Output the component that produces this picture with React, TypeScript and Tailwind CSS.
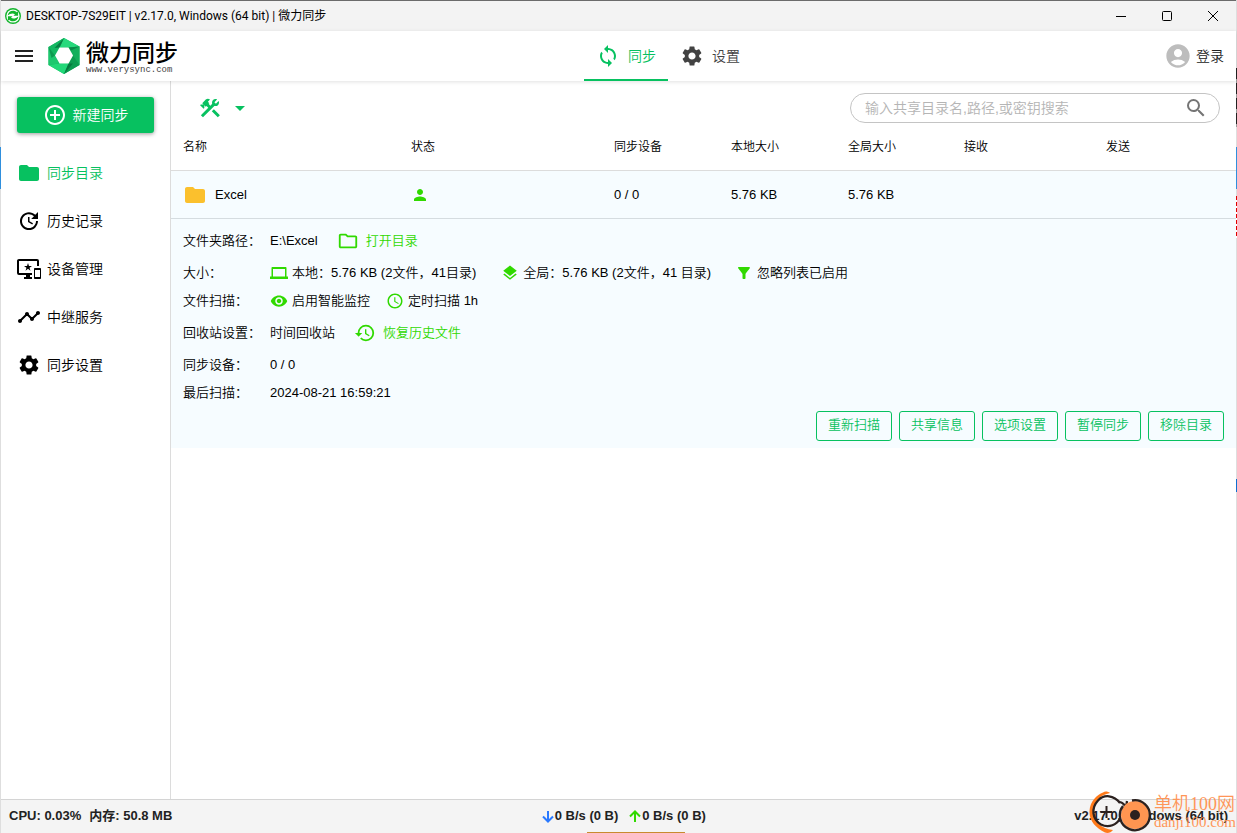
import type { ComponentType, ReactNode } from "react";
import {
  MdAccessTime,
  MdAccountCircle,
  MdAddCircleOutline,
  MdArrowDropDown,
  MdFilterAlt,
  MdFolder,
  MdHistory,
  MdImportantDevices,
  MdLayers,
  MdMenu,
  MdOutlineFolder,
  MdPerson,
  MdSearch,
  MdSettings,
  MdSync,
  MdTimeline,
  MdUpdate,
  MdVisibility,
} from "react-icons/md";

type IconType = ComponentType<{ className?: string }>;

function AppIcon() {
  return (
    <svg viewBox="0 0 16 16" className="size-4" aria-hidden="true">
      <circle cx="8" cy="8" r="8" fill="#13b52c" />
      <circle cx="8" cy="8" r="6.6" fill="#fff" />
      <path d="M2.600 7.600C2.900 4.700 5.200 2.700 8 2.700c1.600 0 2.800.5 3.800 1.500l1.300-.9v4.500H8.500l1.500-1.500C8 5 5 5.500 2.600 7.600z" fill="#13b52c" />
      <path d="M13.400 8.400c-.3 2.900-2.600 4.900-5.400 4.900-1.600 0-2.800-.5-3.800-1.500l-1.300.9V8.200h4.600L6 9.700c2 1.300 5 .8 7.400-1.300z" fill="#13b52c" />
    </svg>
  );
}

function HexLogo() {
  return (
    <svg viewBox="0 0 32 36" className="h-9 w-8" aria-hidden="true">
      <path d="M16 0 31.500 8.500V27L16 36 .5 27V9z" fill="#12b560" />
      <path d="M16 0 31.500 8.500 20.500 9.500H11.500z" fill="#27d97c" />
      <path d="M31.500 8.500V27L25 17.500 20.500 9.500z" fill="#12b05c" />
      <path d="M31.500 27 16 36 20.500 25.500 25 17.500z" fill="#0c9c50" />
      <path d="M16 36 .5 27 11 25.500H20.500z" fill="#22d878" />
      <path d="M.5 27V9L7 17.500 11 25.500z" fill="#1dc86e" />
      <path d="M.5 9 16 0 11.500 9.500 7 17.500z" fill="#14b862" />
      <path d="M16 0 11.500 9.500 6.500 10z" fill="#087f43" />
      <path d="M31.500 8.500 20.500 9.500 23 12.500z" fill="#0a8a49" />
      <path d="M16 36 20.500 25.500 25 25.500z" fill="#067a3f" />
      <path d="M.5 9 7 17.500 3.500 20z" fill="#0d9a50" />
      <path d="M11.500 9.500h9L25 17.500l-4.500 8h-9L7 17.500z" fill="#fff" />
    </svg>
  );
}

function HammerWrench() {
  return (
    <svg viewBox="0 0 24 24" className="size-6" fill="currentColor" aria-hidden="true">
      <path d="M13.78 15.3L19.78 21.3L21.89 19.14L15.89 13.14L13.78 15.3M17.5 10.1C17.11 10.1 16.69 10.05 16.36 9.91L4.97 21.25L2.86 19.14L10.27 11.74L8.5 9.96L7.78 10.66L6.33 9.25V12.11L5.63 12.81L2.11 9.25L2.81 8.55H5.62L4.22 7.14L7.78 3.58C8.95 2.41 10.83 2.41 12 3.58L9.89 5.74L11.3 7.14L10.59 7.85L12.38 9.63L14.2 7.75C14.06 7.42 14 7 14 6.63C14 4.66 15.56 3.11 17.5 3.11C18.09 3.11 18.61 3.25 19.08 3.53L16.41 6.2L17.91 7.7L20.58 5.03C20.86 5.5 21 6 21 6.63C21 8.55 19.45 10.1 17.5 10.1Z" />
    </svg>
  );
}

function LaptopIcon({ className }: { className?: string }) {
  return (
    <svg viewBox="0 0 18 18" className={className} fill="currentColor" aria-hidden="true">
      <path fillRule="evenodd" d="M2.500 3h13c.6 0 1 .4 1 1v8.500H18V15H0v-2.500h1.500V4c0-.6.4-1 1-1zM3 5v7.500h12V5z" />
    </svg>
  );
}

function ArrowIcon({ up }: { up?: boolean }) {
  return (
    <svg
      viewBox="0 0 14 14"
      className={up ? "size-[14px] text-[#30d900]" : "size-[14px] text-[#2979ff]"}
      fill="none"
      stroke="currentColor"
      strokeWidth="2"
      aria-hidden="true"
    >
      <path d={up ? "M7 13V2.500M2 7.500l5-5 5 5" : "M7 2v10.500M2 7.500l5 5 5-5"} />
    </svg>
  );
}

function TitleBar() {
  return (
    <div className="flex h-[31px] shrink-0 items-center justify-between border-t border-[#6b6b6b] bg-[#f3f3f3] pl-1">
      <div className="flex items-center gap-[5px] font-[Roboto,'Noto_Sans_CJK_SC',sans-serif] text-[12px] font-normal text-black">
        <AppIcon />
        <span>DESKTOP-7S29EIT | v2.17.0, Windows (64 bit) | 微力同步</span>
      </div>
      <div className="flex">
        <button aria-label="最小化" className="grid h-7 w-[46px] place-items-center">
          <svg viewBox="0 0 10 10" className="size-[10px]" stroke="#000" fill="none"><path d="M0 5.500h10" /></svg>
        </button>
        <button aria-label="最大化" className="grid h-7 w-[46px] place-items-center">
          <svg viewBox="0 0 10 10" className="size-[10px]" stroke="#000" fill="none"><rect x=".5" y=".5" width="9" height="9" rx="1" /></svg>
        </button>
        <button aria-label="关闭" className="grid h-7 w-[46px] place-items-center">
          <svg viewBox="0 0 10 10" className="size-[10px]" stroke="#000" fill="none"><path d="M0 0l10 10M10 0L0 10" /></svg>
        </button>
      </div>
    </div>
  );
}

function Header() {
  return (
    <header className="z-10 flex h-[50px] shrink-0 items-stretch justify-between bg-white pr-3 pl-[11px] shadow-[0_1px_4px_rgba(0,0,0,0.12)]">
      <div className="flex items-center gap-3">
        <button aria-label="菜单"><MdMenu className="size-6 text-[#222]" /></button>
        <a href="#home" className="flex items-center gap-[6px] text-black">
          <HexLogo />
          <span className="flex w-[92px] flex-col whitespace-nowrap">
            <span className="text-[23px] leading-[27px] font-medium">微力同步</span>
            <span className="font-['Liberation_Mono',monospace] text-[9px] leading-[6px] text-[#444]">www.verysync.com</span>
          </span>
        </a>
      </div>
      <nav className="flex pr-1.5 text-[14px]">
        <a href="#sync" className="flex items-center gap-2 border-y-2 border-t-transparent border-b-[#07c160] px-3 text-[#07c160]">
          <MdSync className="size-6" />同步
        </a>
        <a href="#settings" className="flex items-center gap-2 border-y-2 border-transparent px-3 text-[#424242]">
          <MdSettings className="size-6" />设置
        </a>
      </nav>
      <button className="flex items-center gap-1 text-[14px] text-[#222]">
        <MdAccountCircle className="size-7 text-[#bdbdbd]" />登录
      </button>
    </header>
  );
}

const navItems: { icon: IconType; label: string; active?: boolean }[] = [
  { icon: MdFolder, label: "同步目录", active: true },
  { icon: MdUpdate, label: "历史记录" },
  { icon: MdImportantDevices, label: "设备管理" },
  { icon: MdTimeline, label: "中继服务" },
  { icon: MdSettings, label: "同步设置" },
];

function Sidebar() {
  return (
    <aside className="flex w-[170px] shrink-0 flex-col gap-4 border-r border-[#dcdcdc] px-4 pt-4">
      <button className="flex h-9 items-center justify-center gap-1.5 rounded-[3px] bg-[#07c160] text-[14px] text-white shadow-[0_1px_4px_rgba(0,0,0,0.4)]">
        <MdAddCircleOutline className="size-6" />新建同步
      </button>
      <nav>
        {navItems.map(({ icon: Icon, label, active }) => (
          <a
            key={label}
            href="#nav"
            className={active ? "flex h-12 items-center gap-1.5 text-[14px] text-[#07c160]" : "flex h-12 items-center gap-1.5 text-[14px] text-black"}
          >
            <Icon className="size-6" />
            {label}
          </a>
        ))}
      </nav>
    </aside>
  );
}

function DetailRow({ label, tall, children }: { label: string; tall?: boolean; children: ReactNode }) {
  return (
    <div className={tall ? "flex h-9 items-center" : "flex h-7 items-center"}>
      <dt className="w-[87px] shrink-0">{label}</dt>
      <dd className="flex items-center">{children}</dd>
    </div>
  );
}

const columns = ["名称", "状态", "同步设备", "本地大小", "全局大小", "接收", "发送"];
const actions = ["重新扫描", "共享信息", "选项设置", "暂停同步", "移除目录"];

function Content() {
  return (
    <main className="min-w-0 flex-1">
      <div className="flex h-[42px] items-end justify-between pr-4 pl-[27px]">
        <button aria-label="工具" className="flex h-[30px] items-center gap-1.5 text-[#07c160]">
          <HammerWrench />
          <MdArrowDropDown className="size-6" />
        </button>
        <label className="flex h-[30px] w-[370px] items-center rounded-full border border-[#c4c4c4] pr-[11px] pl-[14px]">
          <input
            aria-label="搜索"
            placeholder="输入共享目录名,路径,或密钥搜索"
            className="min-w-0 flex-1 text-[14px] outline-none placeholder:text-[#b5b5b5]"
          />
          <MdSearch className="size-6 text-[#757575]" />
        </label>
      </div>
      <table className="w-full table-fixed text-left text-[13px]">
        <colgroup>
          <col className="w-[228px]" />
          <col className="w-[203px]" />
          <col className="w-[117px]" />
          <col className="w-[117px]" />
          <col className="w-[116px]" />
          <col className="w-[142px]" />
          <col />
        </colgroup>
        <thead>
          <tr className="h-[47px] border-b border-[#dcdcdc] text-[12px]">
            {columns.map((name) => (
              <th key={name} className="pt-0.5 pl-3 font-[350]">{name}</th>
            ))}
          </tr>
        </thead>
        <tbody>
          <tr className="h-12 border-b border-[#d5dce0] bg-[#f6fcff]">
            <td className="pt-0.5 pl-3">
              <span className="flex items-center gap-2">
                <MdFolder className="size-6 text-[#fbc02d]" />Excel
              </span>
            </td>
            <td className="pt-0.5 pl-3"><MdPerson className="size-[18px] text-[#30d900]" /></td>
            <td className="pt-0.5 pl-3">0 / 0</td>
            <td className="pt-0.5 pl-3">5.76 KB</td>
            <td className="pt-0.5 pl-3">5.76 KB</td>
            <td />
            <td />
          </tr>
        </tbody>
      </table>
      <section className="bg-[#f6fcff] px-3 pt-1 pb-[7px] text-[13px]">
        <dl>
          <DetailRow label="文件夹路径：" tall>
            E:\Excel
            <a href="#open" className="ml-[19px] flex items-center gap-[7px] text-[#30d900]">
              <MdOutlineFolder className="size-[22px]" />打开目录
            </a>
          </DetailRow>
          <DetailRow label="大小：">
            <span className="flex items-center gap-1"><LaptopIcon className="size-[18px] text-[#30d900]" />本地：5.76 KB (2文件，41目录)</span>
            <span className="ml-[25px] flex items-center gap-1"><MdLayers className="size-[18px] text-[#30d900]" />全局：5.76 KB (2文件，41 目录)</span>
            <span className="ml-6 flex items-center gap-1"><MdFilterAlt className="size-[18px] text-[#30d900]" />忽略列表已启用</span>
          </DetailRow>
          <DetailRow label="文件扫描：">
            <span className="flex items-center gap-1"><MdVisibility className="size-[18px] text-[#30d900]" />启用智能监控</span>
            <span className="ml-4 flex items-center gap-1"><MdAccessTime className="size-[18px] text-[#30d900]" />定时扫描 1h</span>
          </DetailRow>
          <DetailRow label="回收站设置：" tall>
            时间回收站
            <a href="#restore" className="ml-[19px] flex items-center gap-[7px] text-[#30d900]">
              <MdHistory className="size-[22px]" />恢复历史文件
            </a>
          </DetailRow>
          <DetailRow label="同步设备：">0 / 0</DetailRow>
          <DetailRow label="最后扫描：">2024-08-21 16:59:21</DetailRow>
        </dl>
        <div className="flex justify-end gap-[7px] pt-1">
          {actions.map((name) => (
            <button key={name} className="h-[30px] w-[76px] rounded-[3px] border border-[#07c160] pb-0.5 text-[#07c160]">{name}</button>
          ))}
        </div>
      </section>
    </main>
  );
}

function Footer() {
  return (
    <footer className="flex h-[34px] shrink-0 items-center justify-between border-t border-[#d4d4d4] bg-[#f4f4f4] px-2 pb-0.5 text-[13px] font-bold text-[#222]">
      <div className="flex gap-2"><span>CPU: 0.03%</span><span>内存: 50.8 MB</span></div>
      <div className="flex items-center gap-2.5">
        <span className="flex items-center"><ArrowIcon />0 B/s (0 B)</span>
        <span className="flex items-center"><ArrowIcon up />0 B/s (0 B)</span>
      </div>
      <div>v2.17.0, Windows (64 bit)</div>
    </footer>
  );
}

function Watermark() {
  return (
    <div className="pointer-events-none absolute right-0 bottom-0 z-20 flex items-end gap-0.5 font-['Liberation_Serif','Noto_Sans_CJK_SC',serif] text-[#ff9658]">
      <svg viewBox="0 0 64 42" className="h-[42px] w-16" fill="none" aria-hidden="true">
        <path d="M22 2C20 .5 17 0 15 1.500 9 4 2 10 1.500 20 1 30 8 37 17 41.500c3 1 6 0 8-2.500C13 38 6 30 6 20 6 10 12 4 22 2z" fill="#ff7a1a" />
        <path d="M32 12C26 4 16 3 10 9.500c-7 7.500-6 19 3 24 8 4 16 0 19-6M32 11c3 1 5 3 6 6l1-7" stroke="#2b211f" strokeWidth="2.300" />
        <path d="M12.500 21H24M18.500 15v12" stroke="#2b211f" strokeWidth="2" />
        <circle cx="47" cy="24" r="14" fill="#ff9551" />
        <path d="M44 9.500A15 15 0 1 1 35 15" stroke="#2b211f" strokeWidth="2.300" />
        <circle cx="47" cy="24" r="5" fill="#2b211f" />
      </svg>
      <div className="whitespace-nowrap pb-[3px]">
        <div className="text-[18px] leading-[19px]">单机100网</div>
        <div className="text-[15px] leading-4">danji100.com</div>
      </div>
    </div>
  );
}

function DesktopEdges() {
  return (
    <div aria-hidden="true">
      <div className="absolute top-[147px] -left-px h-[42px] w-px bg-[#2f8fdd]" />
      <div className="absolute top-[68px] -right-px h-[59px] w-px bg-[repeating-linear-gradient(#222_0_11px,#999_11px_15px)]" />
      <div className="absolute top-[147px] -right-px h-[42px] w-px bg-[#2f8fdd]" />
      <div className="absolute top-[196px] -right-px h-[42px] w-px bg-[repeating-linear-gradient(#e00000_0_4px,#fff_4px_6px)]" />
      <div className="absolute top-[479px] -right-px h-[13px] w-px bg-[#0f6fd0]" />
      <div className="absolute bottom-0 left-[586px] h-px w-[98px] bg-[#c88a2e]" />
    </div>
  );
}

export default function App() {
  return (
    <div className="relative flex min-h-screen flex-col border-x border-[#dedede] bg-white font-['Liberation_Sans','Noto_Sans_CJK_SC',sans-serif] font-[350] text-black">
      <TitleBar />
      <Header />
      <div className="flex flex-1">
        <Sidebar />
        <Content />
      </div>
      <Footer />
      <Watermark />
      <DesktopEdges />
    </div>
  );
}
